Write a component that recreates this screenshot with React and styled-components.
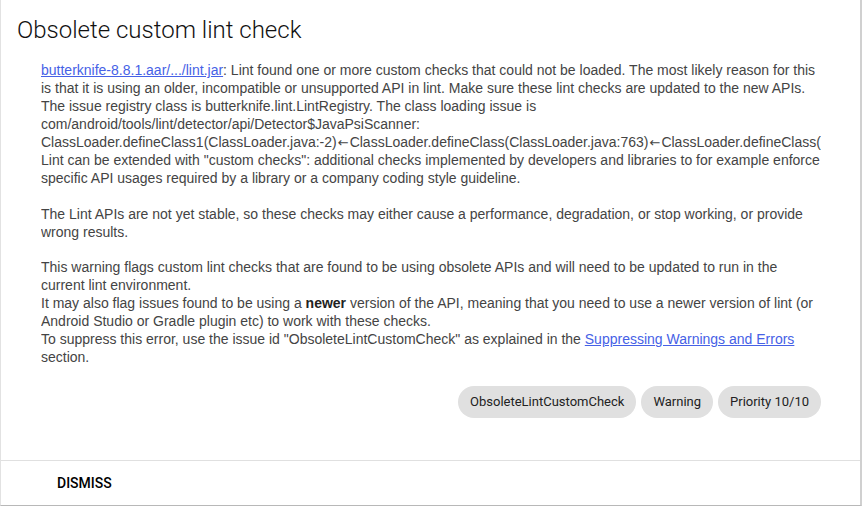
import React from "react";
import styled, { createGlobalStyle } from "styled-components";

const GlobalStyle = createGlobalStyle`
  body {
    margin: 0;
    background: #ffffff;
  }
`;

const chips = ["ObsoleteLintCustomCheck", "Warning", "Priority 10/10"];

const App = () => {
  return (
    <>
      <GlobalStyle />
      <Card>
        <Title>Obsolete custom lint check</Title>
        <Body>
          <Link href="#">butterknife-8.8.1.aar/.../lint.jar</Link>: Lint found
          one or more custom checks that could not be loaded. The most likely
          reason for this is that it is using an older, incompatible or
          unsupported API in lint. Make sure these lint checks are updated to
          the new APIs.
          <br />
          The issue registry class is butterknife.lint.LintRegistry. The class
          loading issue is
          <br />
          com/android/tools/lint/detector/api/Detector$JavaPsiScanner:
          <br />
          <NoWrap>
            ClassLoader.defineClass1(ClassLoader.java:-2)<Arrow>←</Arrow>ClassLoader.defineClass(ClassLoader.java:763)<Arrow>←</Arrow>ClassLoader.defineClass(SecureClassLoader.java:142)
          </NoWrap>
          <br />
          Lint can be extended with "custom checks": additional checks
          implemented by developers and libraries to for example enforce
          specific API usages required by a library or a company coding style
          guideline.
          <br />
          <br />
          The Lint APIs are not yet stable, so these checks may either cause a
          performance, degradation, or stop working, or provide wrong results.
          <br />
          <br />
          This warning flags custom lint checks that are found to be using
          obsolete APIs and will need to be updated to run in the current lint
          environment.
          <br />
          It may also flag issues found to be using a <b>newer</b> version of
          the API, meaning that you need to use a newer version of lint (or
          Android Studio or Gradle plugin etc) to work with these checks.
          <br />
          To suppress this error, use the issue id "ObsoleteLintCustomCheck" as
          explained in the <Link href="#">Suppressing Warnings and Errors</Link>{" "}
          section.
        </Body>
        <ChipRow>
          {chips.map((c) => (
            <Chip key={c}>{c}</Chip>
          ))}
        </ChipRow>
        <Actions>
          <Btn>Dismiss</Btn>
        </Actions>
      </Card>
    </>
  );
};

export default App;

const Card = styled.div`
  width: 862px;
  height: 506px;
  box-sizing: border-box;
  border-left: 1px solid #e2e2e2;
  border-right: 2px solid #d0d0d0;
  border-bottom: 1px solid #b8b8b8;
  background: #fff;
  display: flex;
  flex-direction: column;
`;

const Title = styled.div`
  font-family: Roboto, "Liberation Sans", sans-serif;
  font-size: 24px;
  font-weight: 300;
  color: #111;
  padding: 15px 0 0 16px;
  line-height: 30px;
  margin-bottom: 17px;
`;

const Body = styled.div`
  font-family: "Liberation Sans", Arial, sans-serif;
  font-size: 14px;
  line-height: 17.95px;
  color: #444;
  margin-left: 40px;
  width: 780px;
  overflow: hidden;

  b {
    color: #222;
  }
`;

const NoWrap = styled.span`
  white-space: nowrap;
`;

const Arrow = styled.span`
  font-family: "DejaVu Sans", sans-serif;
  font-size: 13px;
  margin: 0 1px;
`;

const Link = styled.a`
  color: #4661e6;
  text-decoration: underline;
`;

const ChipRow = styled.div`
  display: flex;
  justify-content: flex-end;
  gap: 5px;
  width: 780px;
  margin: 19px 0 0 40px;
`;

const Chip = styled.div`
  font-family: Roboto, "Liberation Sans", sans-serif;
  font-size: 13px;
  color: #222;
  background: #e0e0e0;
  height: 32px;
  line-height: 32px;
  border-radius: 16px;
  padding: 0 12px;
`;

const Actions = styled.div`
  margin-top: auto;
  border-top: 1px solid #e0e0e0;
  height: 44px;
  display: flex;
  align-items: center;
  padding-left: 48px;
`;

const Btn = styled.button`
  font-family: Roboto, "Liberation Sans", sans-serif;
  font-size: 14px;
  font-weight: 500;
  text-transform: uppercase;
  background: none;
  border: none;
  color: #000;
  padding: 0 8px;
  height: 36px;
  cursor: pointer;
`;
